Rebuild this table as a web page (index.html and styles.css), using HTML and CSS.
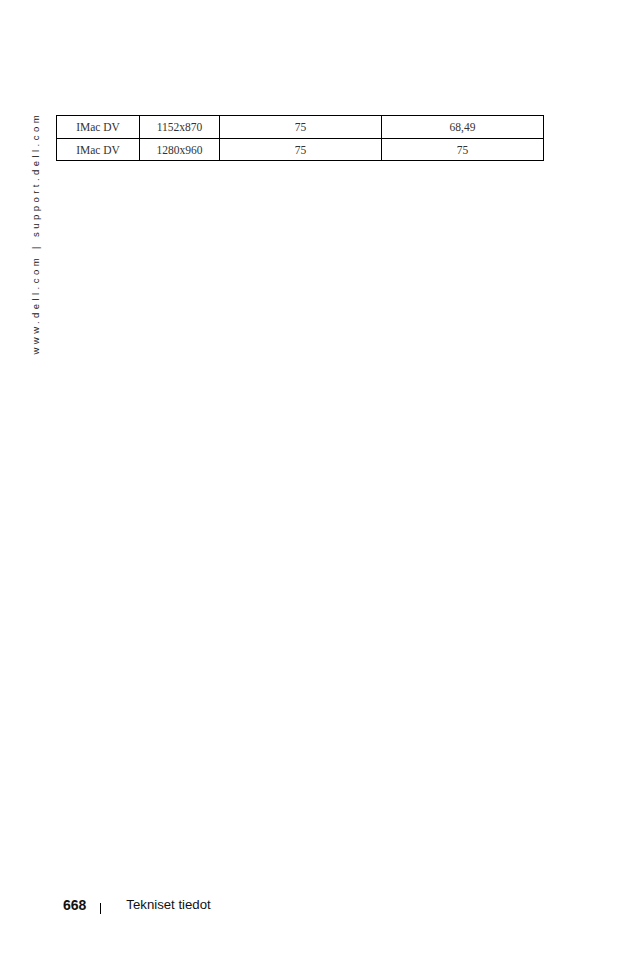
FILE: index.html
```html
<!DOCTYPE html>
<html>
<head>
<meta charset="utf-8">
<link rel="stylesheet" href="styles.css">
</head>
<body>
<div class="page">
  <div class="top">
    <div class="side"><span class="side-text">www.dell.com | support.dell.com</span></div>
    <table class="spec">
      <tr><td class="c1">IMac DV</td><td class="c2">1152x870</td><td class="c3">75</td><td class="c4">68,49</td></tr>
      <tr><td class="c1">IMac DV</td><td class="c2">1280x960</td><td class="c3">75</td><td class="c4">75</td></tr>
    </table>
  </div>
  <div class="footer">
    <span class="num">668</span>
    <span class="bar"></span>
    <span class="title">Tekniset tiedot</span>
  </div>
</div>
</body>
</html>
```
FILE: styles.css
```css
html, body {
  margin: 0;
  padding: 0;
  background: #fff;
}
.page {
  width: 636px;
  height: 954px;
  display: flex;
  flex-direction: column;
  justify-content: space-between;
  box-sizing: border-box;
  padding: 115px 0 40px 0;
}
.top {
  display: flex;
  align-items: flex-start;
}
.side {
  width: 56px;
  display: flex;
  justify-content: center;
  padding-left: 16px;
  box-sizing: border-box;
}
.side-text {
  writing-mode: vertical-rl;
  transform: rotate(180deg);
  font-family: "Liberation Sans", Arial, sans-serif;
  font-size: 9.5px;
  letter-spacing: 3.45px;
  color: #222;
  line-height: 1;
  margin-top: -3px;
}
.spec {
  border-collapse: collapse;
  font-family: "Liberation Serif", "Times New Roman", serif;
  font-size: 11.5px;
  color: #333;
}
.spec td {
  border: 1px solid #000;
  text-align: center;
  height: 22px;
  padding: 0;
  box-sizing: border-box;
  vertical-align: middle;
}
.spec tr:first-child td { height: 23px; }
.c1 { width: 83px; }
.c2 { width: 80px; }
.c3 { width: 162px; }
.c4 { width: 162px; }
.footer {
  display: flex;
  align-items: center;
  padding-left: 63px;
  font-family: "Liberation Sans Narrow", "Liberation Sans", Arial, sans-serif;
  font-size: 13px;
  color: #111;
}
.num {
  font-weight: bold;
  font-size: 14px;
}
.bar {
  width: 1px;
  height: 11px;
  background: #000;
  margin: 8px 25px 0 14px;
}
.title {
  font-size: 13.2px;
}
```
